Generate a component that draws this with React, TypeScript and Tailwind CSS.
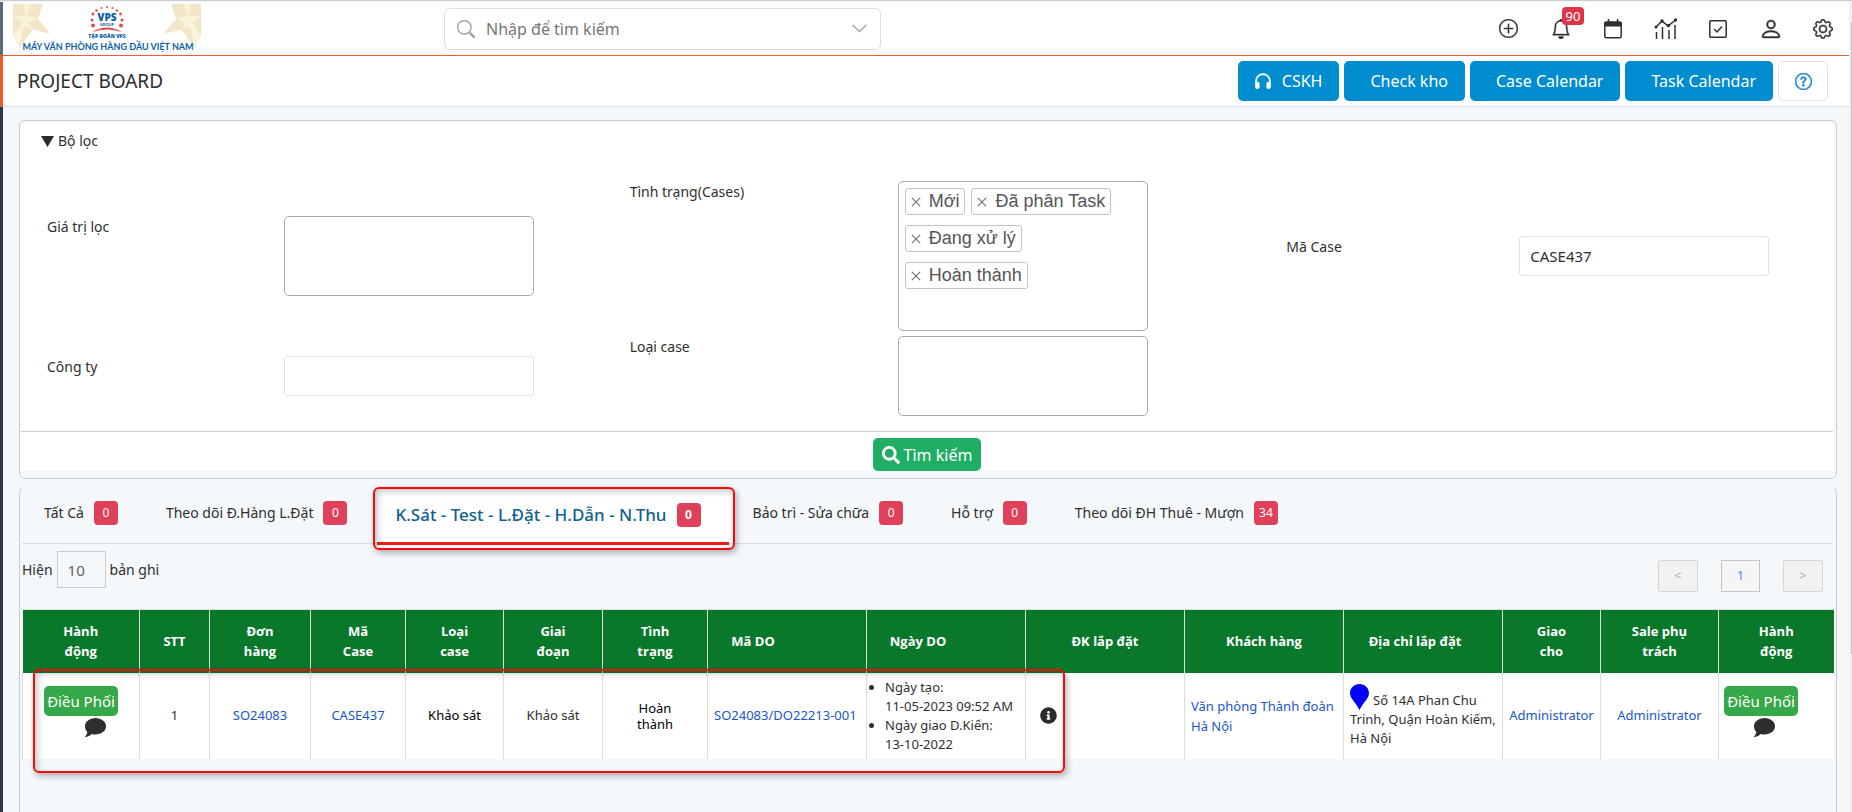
import { useState } from 'react'
import type { ReactNode } from 'react'
import clsx from 'clsx'
import {
  BsBell,
  BsChevronDown,
  BsGear,
  BsHeadphones,
  BsPerson,
  BsPlusCircle,
  BsQuestionCircle,
  BsSearch
} from 'react-icons/bs'
import { FaInfoCircle, FaSearch } from 'react-icons/fa'

const TABS = [
  { label: 'Tất Cả', count: 0 },
  { label: 'Theo dõi Đ.Hàng L.Đặt', count: 0 },
  { label: 'K.Sát - Test - L.Đặt - H.Dẫn - N.Thu', count: 0 },
  { label: 'Bảo trì - Sửa chữa', count: 0 },
  { label: 'Hỗ trợ', count: 0 },
  { label: 'Theo dõi ĐH Thuê - Mượn', count: 34 }
]

const COLUMNS = [
  { title: 'Hành động', width: 'w-[117px]', pad: 'px-8' },
  { title: 'STT', width: 'w-[70px]', pad: 'px-1' },
  { title: 'Đơn hàng', width: 'w-[101px]', pad: 'px-6' },
  { title: 'Mã Case', width: 'w-[95px]', pad: 'px-6' },
  { title: 'Loại case', width: 'w-[98px]', pad: 'px-6' },
  { title: 'Giai đoạn', width: 'w-[99px]', pad: 'px-6' },
  { title: 'Tình trạng', width: 'w-[105px]', pad: 'px-6' },
  { title: 'Mã DO', width: 'w-[159px]', pad: 'pl-2 pr-19' },
  { title: 'Ngày DO', width: 'w-[159px]', pad: 'pl-2 pr-16' },
  { title: 'ĐK lắp đặt', width: 'w-[159px]', pad: 'px-1' },
  { title: 'Khách hàng', width: 'w-[159px]', pad: 'px-1' },
  { title: 'Địa chỉ lắp đặt', width: 'w-[159px]', pad: 'pl-1 pr-5' },
  { title: 'Giao cho', width: 'w-[98px]', pad: 'px-6' },
  { title: 'Sale phụ trách', width: 'w-[118px]', pad: 'px-6' },
  { title: 'Hành động', width: 'w-[115px]', pad: 'px-8' }
]

function Star({ className }: { className?: string }) {
  return (
    <svg className={className} viewBox="0 0 36 42" preserveAspectRatio="none">
      <path d="M0 0h30l-5 14 13 15-18-5L6 42 0 30z" fill="#f3e6c6" />
      <path d="M0 12l13-1L10 0h8l-5 11 12 3-10 4 5 6-9-3-5 21-6-12 9-12z" fill="#faf3dc" />
    </svg>
  )
}

function Logo() {
  return (
    <a href="#" aria-label="VPS" className="relative flex h-[50px] w-[188px] shrink-0 flex-col items-center">
      <Star className="absolute left-0 top-0 h-11 w-9" />
      <Star className="absolute right-0 top-0 h-11 w-9 -scale-x-100" />
      <svg className="relative h-12 w-full" viewBox="0 0 188 48">
        <g fill="#e5484d">
          <circle cx="80" cy="21.500" r="1.900" />
          <circle cx="79" cy="16" r="1.500" />
          <circle cx="80" cy="10" r="1.400" />
          <circle cx="83.500" cy="6.500" r="1.200" />
          <circle cx="88.500" cy="4" r="1" />
          <circle cx="94" cy="3" r="1" />
          <circle cx="99.500" cy="4" r="1" />
          <circle cx="104" cy="6.500" r="1.200" />
          <circle cx="107.500" cy="10" r="1.400" />
          <circle cx="109" cy="16" r="1.500" />
          <circle cx="108" cy="21.500" r="1.900" />
        </g>
        <path d="M79 28q15-9 30 0q-15-5-30 0z" fill="#e5484d" />
        <text x="94" y="17" textAnchor="middle" fontSize="10" fontWeight="800" fill="#0d5fa5" fontFamily="Open Sans">VPS</text>
        <text x="94" y="22" textAnchor="middle" fontSize="4" fontWeight="700" fill="#0d5fa5" fontFamily="Open Sans">GROUP</text>
        <text x="94" y="34" textAnchor="middle" fontSize="5" fontWeight="800" fill="#0d5fa5" fontFamily="Open Sans">TẬP ĐOÀN VPS</text>
        <text x="95" y="46" textAnchor="middle" fontSize="9" fontWeight="700" fill="#0d5fa5" fontFamily="Lato, Open Sans">MÁY VĂN PHÒNG HÀNG ĐẦU VIỆT NAM</text>
      </svg>
    </a>
  )
}

function CalendarIcon() {
  return (
    <svg width="20" height="20" viewBox="0 0 20 20" fill="none" stroke="currentColor">
      <rect x="1.800" y="3" width="16.400" height="15.800" rx="1.500" strokeWidth="1.500" />
      <path d="M1.500 3h17v4.500h-17z" fill="currentColor" stroke="none" />
      <path d="M5.500 0v4M14.500 0v4" strokeWidth="1.500" />
    </svg>
  )
}

function ChartIcon() {
  return (
    <svg width="24" height="22" viewBox="0 0 24 22" fill="none" stroke="currentColor" strokeWidth="1.500">
      <path d="M2 9l6-6 6 5 7.500-6" />
      <g fill="currentColor" stroke="none">
        <circle cx="2" cy="9" r="1.500" />
        <circle cx="8" cy="3" r="1.700" />
        <circle cx="14.500" cy="7.500" r="1.700" />
        <circle cx="21.500" cy="2" r="1.700" />
      </g>
      <path d="M2.500 14v7M8.500 9v12M15 12v9M21 7v14" />
    </svg>
  )
}

function CheckBoxIcon() {
  return (
    <svg width="18" height="18" viewBox="0 0 18 18" fill="none" stroke="currentColor" strokeWidth="1.500">
      <rect x="0.800" y="0.800" width="16.400" height="16.400" rx="1" />
      <path d="M5 9l3 3 5-5.500" />
    </svg>
  )
}

function HeaderIcon({ label, children }: { label: string; children: ReactNode }) {
  return (
    <button type="button" aria-label={label} className="relative flex size-6 items-center justify-center">
      {children}
    </button>
  )
}

function TopBar() {
  return (
    <header className="flex h-[54px] items-center border-b border-[#ee5d30] bg-white pl-2.5 pr-[14px]">
      <Logo />
      <div className="ml-[243px] flex h-[42px] w-[437px] items-center rounded-md border border-[#dfdfdf] px-3 text-[#a5a5a5]">
        <BsSearch size={18} strokeWidth={0.3} />
        <input
          type="text"
          aria-label="Tìm kiếm"
          placeholder="Nhập để tìm kiếm"
          className="ml-[11px] min-w-0 flex-1 text-base text-gray-700 outline-none placeholder:text-[#777]"
        />
        <BsChevronDown size={17} strokeWidth={0.5} />
      </div>
      <nav className="ml-auto flex w-[339px] items-center justify-between">
        <HeaderIcon label="Thêm"><BsPlusCircle size={19} strokeWidth={0.3} /></HeaderIcon>
        <HeaderIcon label="Thông báo">
          <BsBell size={20} strokeWidth={0.3} />
          <span className="absolute -top-[10px] left-[13px] rounded-sm bg-[#dc3545] px-1 text-[13px] leading-[18px] text-white">90</span>
        </HeaderIcon>
        <HeaderIcon label="Lịch"><CalendarIcon /></HeaderIcon>
        <HeaderIcon label="Báo cáo"><ChartIcon /></HeaderIcon>
        <HeaderIcon label="Công việc"><CheckBoxIcon /></HeaderIcon>
        <HeaderIcon label="Tài khoản"><BsPerson size={24} strokeWidth={0.3} /></HeaderIcon>
        <HeaderIcon label="Cài đặt"><BsGear size={20} strokeWidth={0.3} /></HeaderIcon>
      </nav>
    </header>
  )
}

function BlueButton({ className, children }: { className?: string; children: ReactNode }) {
  return (
    <button type="button" className={clsx('flex h-10 items-center rounded-[5px] bg-[#008dcf] pr-[17px] text-base text-white', className)}>
      {children}
    </button>
  )
}

function TitleBar() {
  return (
    <div className="flex h-[51px] items-center border-b border-[#dee2e6] bg-white pl-3.5 pr-[21px]">
      <h1 className="text-[19px] leading-6 text-[#2b2b2b]">PROJECT BOARD</h1>
      <div className="ml-auto flex gap-[5px]">
        <BlueButton className="gap-[9px] pl-[15px]">
          <BsHeadphones size={20} strokeWidth={0.5} />
          CSKH
        </BlueButton>
        <BlueButton className="pl-[26px]">Check kho</BlueButton>
        <BlueButton className="pl-[26px]">Case Calendar</BlueButton>
        <BlueButton className="pl-[26px]">Task Calendar</BlueButton>
        <button type="button" aria-label="Trợ giúp" className="flex h-10 w-[50px] items-center justify-center rounded-[5px] border border-[#dee2e6] text-[#0d86cf]">
          <BsQuestionCircle size={17} strokeWidth={0.5} />
        </button>
      </div>
    </div>
  )
}

function Tag({ children }: { children: ReactNode }) {
  return (
    <span className="flex h-[27px] items-center gap-2 rounded-[3px] border border-[#c4c4c4] px-[5px] font-['Liberation_Sans',sans-serif] text-[18px] text-[#555]">
      <button type="button" aria-label="Xóa">
        <svg width="10" height="10" viewBox="0 0 12 12" stroke="#777" strokeWidth="1.500">
          <path d="M1 1l10 10M11 1L1 11" />
        </svg>
      </button>
      {children}
    </span>
  )
}

function FilterPanel() {
  const [caseCode, setCaseCode] = useState('CASE437')

  return (
    <section className="rounded-md border border-[#ccc] pb-[7px] pl-px pr-[3px] pt-0.5">
      <details open className="bg-white text-sm">
        <summary className="flex cursor-pointer list-none items-center gap-1 px-5 pt-1.5 leading-6">
          <svg width="13" height="11" viewBox="0 0 13 11" fill="#2b2b2b"><path d="M0 0h13L6.500 11z" /></svg>
          Bộ lọc
        </summary>
        <div className="grid min-h-[279px] grid-cols-[583fr_657fr_547fr] border-b border-[#ccc] pb-[14px] pl-[26px] pt-7">
          <div className="flex flex-col gap-[60px] pt-[35px]">
            <div className="flex">
              <label htmlFor="filter-value" className="w-[237px] shrink-0 leading-[22px]">Giá trị lọc</label>
              <textarea id="filter-value" className="h-20 w-[250px] resize-none rounded-[5px] border border-[#aaa] p-2" />
            </div>
            <div className="flex">
              <label htmlFor="company" className="w-[237px] shrink-0 leading-[22px]">Công ty</label>
              <input id="company" type="text" className="h-10 w-[250px] rounded-[3px] border border-[#dee2e6] px-2.5" />
            </div>
          </div>
          <div className="flex flex-col gap-[5px]">
            <div className="flex">
              <span id="case-status" className="w-[268px] shrink-0 leading-[22px]">Tình trạng(Cases)</span>
              <div role="group" aria-labelledby="case-status" className="flex h-[150px] w-[250px] flex-wrap content-start items-start gap-x-1.5 gap-y-2.5 rounded-[5px] border border-[#aaa] p-1.5">
                <Tag>Mới</Tag>
                <Tag>Đã phân Task</Tag>
                <Tag>Đang xử lý</Tag>
                <Tag>Hoàn thành</Tag>
              </div>
            </div>
            <div className="flex">
              <label htmlFor="case-type" className="w-[268px] shrink-0 leading-[22px]">Loại case</label>
              <textarea id="case-type" className="h-20 w-[250px] resize-none rounded-[5px] border border-[#aaa] p-2" />
            </div>
          </div>
          <div className="flex items-start pt-[55px]">
            <label htmlFor="case-code" className="w-[233px] shrink-0 leading-[22px]">Mã Case</label>
            <input
              id="case-code"
              type="text"
              value={caseCode}
              onChange={(e) => setCaseCode(e.target.value)}
              className="h-10 w-[250px] rounded-[3px] border border-[#dee2e6] px-2.5 text-[15px]"
            />
          </div>
        </div>
        <div className="flex justify-center pt-1.5">
          <button type="button" className="flex h-[33px] items-center gap-1 rounded-[5px] bg-[#20ad64] px-[9px] text-base text-white">
            <FaSearch size={18} />
            Tìm kiếm
          </button>
        </div>
      </details>
    </section>
  )
}

function Tabs() {
  const [active, setActive] = useState(2)

  return (
    <div role="tablist" className="flex h-[57px] border-b border-[#dcdfe2]">
      {TABS.map((tab, i) => (
        <button
          key={tab.label}
          type="button"
          role="tab"
          aria-selected={i === active}
          onClick={() => setActive(i)}
          className={clsx(
            'relative flex h-[58px] shrink-0 items-center gap-2.5 whitespace-nowrap',
            i === active
              ? 'ml-1.5 border-b-[3px] border-[#ec1c1c] bg-white pl-[18px] pr-7 text-[17px] font-medium text-[#10618f]'
              : 'px-6 pb-1.5 text-sm first:pl-[22px]'
          )}
        >
          {tab.label}
          <span className={clsx('w-6 rounded-sm bg-[#df415b] text-center text-xs leading-6 text-white', i === active && 'font-bold')}>
            {tab.count}
          </span>
          {i === active && (
            <span className="pointer-events-none absolute -bottom-2 -left-1 -right-1.5 top-0 rounded-md border-2 border-[#f50d0d] shadow-[2px_3px_6px_rgba(0,0,0,0.3),inset_3px_3px_6px_rgba(0,0,0,0.2)]" />
          )}
        </button>
      ))}
    </div>
  )
}

function Toolbar() {
  return (
    <div className="flex items-start justify-between pb-[17px] pr-2.5 pt-[7px]">
      <label className="flex items-center gap-1 text-sm">
        Hiện
        <input type="text" defaultValue="10" className="h-[37px] w-[49px] border border-[#ccc] px-2.5 text-[15px] text-[#666]" />
        bản ghi
      </label>
      <div className="mt-[9px] flex gap-[23px] text-[13px]">
        <button type="button" className="h-8 w-10 rounded-xs border border-[#d5d5d5] bg-[#f2f2f2] text-[#aaa]">&lt;</button>
        <button type="button" className="h-8 w-[39px] border border-[#c5c5c5] bg-[#f5f5f5] text-[#5b82ff]">1</button>
        <button type="button" className="h-8 w-10 rounded-xs border border-[#d5d5d5] bg-[#f2f2f2] text-[#aaa]">&gt;</button>
      </div>
    </div>
  )
}

function AssignActions({ className, iconClass }: { className: string; iconClass: string }) {
  return (
    <div className={clsx('flex flex-col gap-0.5 pb-2', className)}>
      <button type="button" className="h-[30px] w-[74px] rounded-[5px] bg-[#37a84a] text-[15px] whitespace-nowrap text-white">Điều Phối</button>
      <button type="button" aria-label="Bình luận" className={iconClass}>
        <svg width="21" height="19" viewBox="0 0 21 19" fill="#2e2e2e">
          <path d="M10.500 0C16.300 0 21 3.600 21 8.300s-4.700 8.200-10.500 8.200c-1.300 0-2.600-.2-3.800-.6C5 17.600 2.700 18.800.3 19c-.3 0-.4-.3-.2-.5 1.200-1.200 2-2.700 2.200-4.400C.9 12.600 0 10.500 0 8.300 0 3.600 4.700 0 10.500 0z" />
        </svg>
      </button>
    </div>
  )
}

function CaseTable() {
  const link = 'text-[#1a56c8]'

  return (
    <div className="relative">
      <table className="w-full table-fixed border-collapse text-[13px]">
        <thead>
          <tr className="h-[63px] border-t border-[#ddd] bg-[#09782b] font-['Open_Sans',sans-serif] text-white">
            {COLUMNS.map((col, i) => (
              <th
                key={i}
                className={clsx('border-l border-[#ddd] text-center align-middle font-bold leading-5 first:border-l-0', col.width, col.pad)}
              >
                {col.title}
              </th>
            ))}
          </tr>
        </thead>
        <tbody>
          <tr className="h-[86px] bg-white text-center [&>td]:border-l [&>td]:border-[#ddd]">
            <td><AssignActions className="items-center" iconClass="ml-7" /></td>
            <td>1</td>
            <td><a href="#" className={link}>SO24083</a></td>
            <td><a href="#" className={link}>CASE437</a></td>
            <td className="text-black">Khảo sát</td>
            <td>Khảo sát</td>
            <td className="px-6 leading-4 text-black">Hoàn thành</td>
            <td className="whitespace-nowrap px-1.5 text-left"><a href="#" className={link}>SO24083/DO22213-001</a></td>
            <td className="text-left">
              <ul className="list-disc whitespace-nowrap pl-[18px] leading-[19px]">
                <li>Ngày tạo:<br />11-05-2023 09:52 AM</li>
                <li>Ngày giao D.Kiến:<br />13-10-2022</li>
              </ul>
            </td>
            <td className="pl-3.5"><FaInfoCircle size={17} color="#2b2b2b" /></td>
            <td className="px-1.5 text-left leading-5"><a href="#" className={link}>Văn phòng Thành đoàn Hà Nội</a></td>
            <td className="px-1.5 text-left leading-[19px]">
              <svg className="mr-1 inline-block align-bottom" width="19" height="26" viewBox="0 0 19 26" fill="#00f">
                <path d="M9.500 0C14.700 0 19 4 19 9.300c0 5-5.500 9-9.500 16.700C5.500 18.300 0 14.300 0 9.300 0 4 4.300 0 9.500 0z" />
              </svg>
              Số 14A Phan Chu Trinh, Quận Hoàn Kiếm, Hà Nội
            </td>
            <td><a href="#" className={link}>Administrator</a></td>
            <td><a href="#" className={link}>Administrator</a></td>
            <td><AssignActions className="items-start pl-[5px]" iconClass="ml-[30px]" /></td>
          </tr>
        </tbody>
      </table>
      {/* khung đỏ nhấn mạnh dòng kết quả */}
      <div className="pointer-events-none absolute -bottom-[14px] left-[11px] top-[60px] w-[57%] rounded-md border-2 border-[#f50d0d] shadow-[2px_3px_6px_rgba(0,0,0,0.3),inset_3px_3px_6px_rgba(0,0,0,0.2)]" />
    </div>
  )
}

export default function App() {
  return (
    <div className="flex min-h-screen border-t border-[#ccc] bg-[#f4f8fb] pt-px font-['Noto_Sans','Open_Sans',sans-serif] text-[#2f2f2f]">
      <aside className="flex w-[3px] shrink-0 flex-col bg-[#2a384a]">
        <div className="h-[53px] bg-[#5a6a78]" />
        <div className="h-[52px] bg-[#f15a29]" />
      </aside>
      <div className="flex min-w-0 flex-1 flex-col">
        <TopBar />
        <TitleBar />
        <main className="flex flex-1 flex-col gap-2 pl-4 pr-3 pt-[13px]">
          <FilterPanel />
          <section className="flex-1 rounded-t-md border-x border-[#ccc] pl-0.5 pr-[3px]">
            <Tabs />
            <Toolbar />
            <CaseTable />
          </section>
        </main>
      </div>
      <div className="w-[3px] shrink-0 bg-[#f1f1f1] pl-0.5 pt-5">
        <div className="h-4/5 bg-[#c1c1c1]" />
      </div>
    </div>
  )
}
